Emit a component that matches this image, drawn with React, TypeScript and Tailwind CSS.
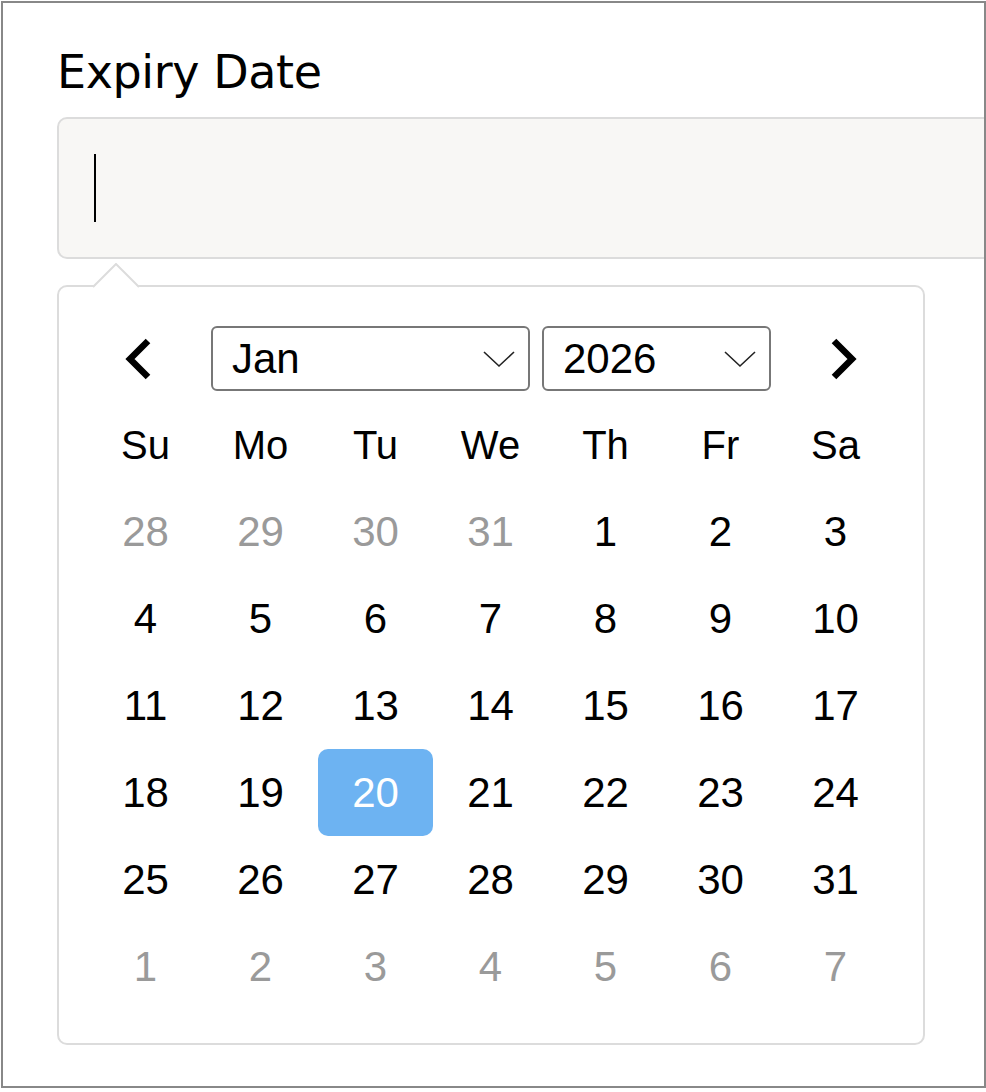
import React from "react";

const rows: { d: number; muted?: boolean; sel?: boolean }[][] = [
  [{ d: 28, muted: true }, { d: 29, muted: true }, { d: 30, muted: true }, { d: 31, muted: true }, { d: 1 }, { d: 2 }, { d: 3 }],
  [{ d: 4 }, { d: 5 }, { d: 6 }, { d: 7 }, { d: 8 }, { d: 9 }, { d: 10 }],
  [{ d: 11 }, { d: 12 }, { d: 13 }, { d: 14 }, { d: 15 }, { d: 16 }, { d: 17 }],
  [{ d: 18 }, { d: 19 }, { d: 20, sel: true }, { d: 21 }, { d: 22 }, { d: 23 }, { d: 24 }],
  [{ d: 25 }, { d: 26 }, { d: 27 }, { d: 28 }, { d: 29 }, { d: 30 }, { d: 31 }],
  [{ d: 1, muted: true }, { d: 2, muted: true }, { d: 3, muted: true }, { d: 4, muted: true }, { d: 5, muted: true }, { d: 6, muted: true }, { d: 7, muted: true }],
];

const names = ["Su", "Mo", "Tu", "We", "Th", "Fr", "Sa"];

function SelectChevron() {
  return (
    <svg width="32" height="18" viewBox="0 0 32 18" className="shrink-0">
      <polyline points="1,2 16,16 31,2" fill="none" stroke="#222" strokeWidth="1.6" />
    </svg>
  );
}

function NavChevron({ dir }: { dir: "left" | "right" }) {
  return (
    <svg width="30" height="44" viewBox="0 0 30 44">
      {dir === "left" ? (
        <polyline points="25,4 7,22 25,40" fill="none" stroke="#000" strokeWidth="6.5" strokeLinejoin="miter" />
      ) : (
        <polyline points="5,4 23,22 5,40" fill="none" stroke="#000" strokeWidth="6.5" strokeLinejoin="miter" />
      )}
    </svg>
  );
}

export default function App() {
  return (
    <div className="bg-white w-[986px] h-[1092px]">
      <div className="ml-px mt-px w-[985px] h-[1087px] border-2 border-[#888] overflow-hidden bg-white pl-[54px]">
        <div
          className="pt-[43px] h-[114px] text-[46px] leading-[52px] text-black tracking-[-0.4px]"
          style={{ fontFamily: '"DejaVu Sans", sans-serif' }}
        >
          Expiry Date
        </div>
        <div className="w-[1000px] h-[142px] rounded-[10px] border-2 border-[#dcdcdc] bg-[#f8f7f5] flex items-center pl-[35px]">
          <div className="w-[2px] h-[68px] bg-black" />
        </div>
        <div
          className="relative mt-[26px] w-[868px] h-[760px] rounded-[10px] border-2 border-[#dcdcdc] bg-white pl-[29px] pt-[39px]"
          style={{ fontFamily: '"Liberation Sans", Arial, sans-serif' }}
        >
          <svg className="absolute left-[34px] top-[-24px]" width="46" height="27" viewBox="0 0 46 27">
            <path d="M1,24 L23,2 L45,24 L45,27 L1,27 Z" fill="#fff" />
            <polyline points="0,24 23,1 46,24" fill="none" stroke="#dcdcdc" strokeWidth="2" />
          </svg>
          <div className="flex items-center h-[65px]">
            <div className="w-[123px] h-[65px] flex items-center pl-[35px]">
              <NavChevron dir="left" />
            </div>
            <div className="w-[319px] h-[65px] rounded-[6px] border-2 border-[#777] flex items-center justify-between pl-[19px] pr-[13px] text-[42px] text-black">
              <span>Jan</span>
              <SelectChevron />
            </div>
            <div className="ml-[12px] w-[229px] h-[65px] rounded-[6px] border-2 border-[#777] flex items-center justify-between pl-[19px] pr-[13px] text-[42px] text-black">
              <span>2026</span>
              <SelectChevron />
            </div>
            <div className="w-[122px] h-[65px] flex items-center pl-[58px]">
              <NavChevron dir="right" />
            </div>
          </div>
          <div className="mt-[10px] grid grid-cols-[repeat(7,115px)]">
            {names.map((n) => (
              <div key={n} className="h-[87px] flex items-center justify-center text-[40px] text-black">
                {n}
              </div>
            ))}
            {rows.flat().map((c, i) => (
              <div
                key={i}
                className={
                  c.sel
                    ? "h-[87px] flex items-center justify-center text-[42px] text-white bg-[#6db3f2] rounded-[10px]"
                    : c.muted
                    ? "h-[87px] flex items-center justify-center text-[42px] text-[#9a9a9a]"
                    : "h-[87px] flex items-center justify-center text-[42px] text-black"
                }
              >
                {c.d}
              </div>
            ))}
          </div>
        </div>
      </div>
    </div>
  );
}
